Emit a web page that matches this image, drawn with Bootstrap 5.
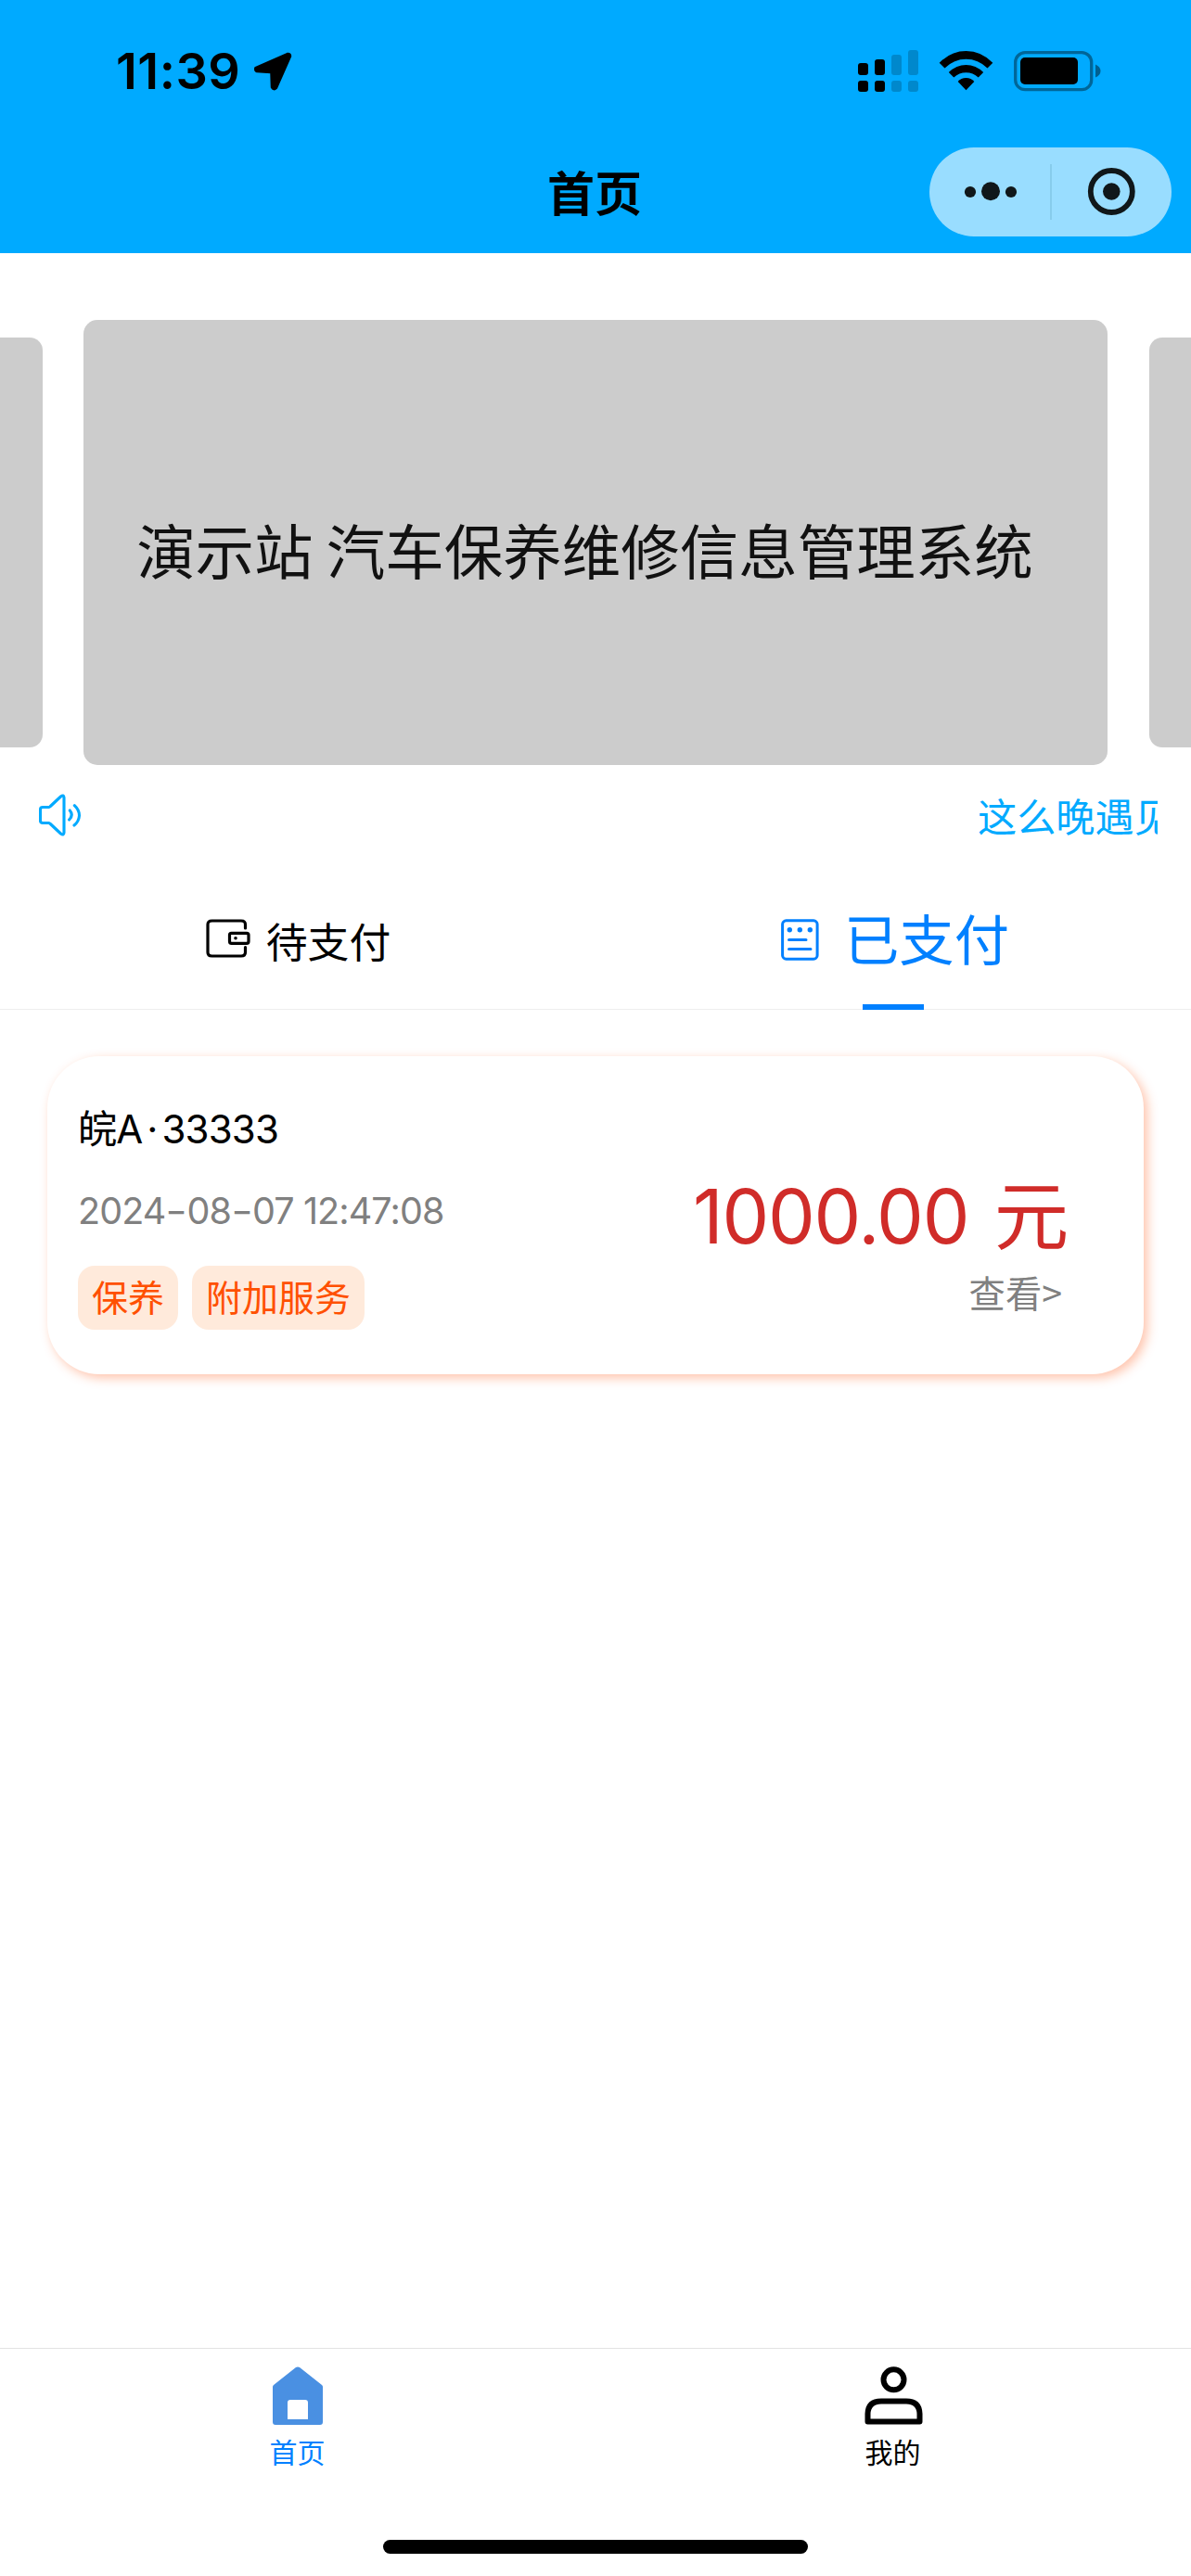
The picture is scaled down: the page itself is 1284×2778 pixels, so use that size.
<!DOCTYPE html>
<html lang="zh-CN">
<head>
<meta charset="utf-8">
<meta name="viewport" content="width=device-width, initial-scale=1">
<title>首页</title>
<link href="https://cdn.jsdelivr.net/npm/bootstrap@5.3.0/dist/css/bootstrap.min.css" rel="stylesheet">
<script src="https://cdn.jsdelivr.net/npm/bootstrap@5.3.0/dist/js/bootstrap.bundle.min.js"></script>
<style>
  body { width: 1284px; height: 2778px; overflow: hidden; background: #fff; color: #000; font-family: "Noto Sans CJK SC", sans-serif; }
  svg { display: block; flex: none; }
  .top-area { height: 273px; background: #00aaff; }
  .status-row { height: 152px; padding: 2px 97px 0 125px; }
  .clock { font: 600 54px/60px Inter, sans-serif; letter-spacing: .5px; }
  .loc { margin-left: 14px; }
  .nav-row { height: 110px; padding-right: 21px; }
  .nav-heading { font-size: 51px; line-height: 60px; font-weight: 700; padding: 0 2px 2px 0; }
  .capsule { width: 261px; height: 96px; border-radius: 48px; background: #99ddff; }
  .swiper-area { padding-top: 72px; gap: 44.5px; }
  .slide { width: 1104px; height: 480px; flex: none; border-radius: 15px; background: #ccc; color: #111; font-size: 63.5px; }
  .slide-main { padding: 13px 23px 0 0; }
  .slide-side { width: 1016px; height: 442px; border-radius: 14px; }
  .notice-row { height: 107px; padding: 0 36px 0 42px; color: #00aaff; font-size: 42.2px; line-height: 60px; }
  .notice-text { width: 194px; }
  .tabs-row { height: 157px; padding-top: 3px; border-bottom: 1px solid #eee; }
  .tab-idle { font-size: 44.8px; line-height: 70px; gap: 17px; padding-left: 1px; }
  .tab-live { font-size: 59.3px; line-height: 80px; gap: 27px; color: #0080ff; padding-left: 4px; }
  .tab-live::after { content: ""; position: absolute; left: 288px; bottom: -1px; width: 66px; height: 6px; background: #0080ff; }
  .order { margin: 50px 51px 0; padding: 46px 80px 48px 33px; height: 343px; border: 0; border-radius: 56px; box-shadow: 4px 4px 12px rgba(255,80,10,.34); }
  .plate { font-family: Inter, "Noto Sans CJK SC", sans-serif; font-size: 42px; line-height: 66px; letter-spacing: -.8px; }
  .mid-dot { display: inline-block; width: 21px; text-align: center; }
  .stamp { margin-top: 22px; font: 400 39.5px/66px Inter, sans-serif; letter-spacing: -.9px; color: #808080; }
  .dash { display: inline-block; width: 23px; text-align: center; transform: scaleX(1.3); }
  .tags { margin-top: 26px; gap: 15px; }
  .tag { padding: 0 15px; height: 69px; border-radius: 18px; background: #ffeadb; color: #ff5000; font-size: 39px; line-height: 64px; }
  .price-col { padding-top: 82px; }
  .amount { font-family: Inter, "Noto Sans CJK SC", sans-serif; font-weight: 400; font-size: 80.5px; line-height: 90px; letter-spacing: -1.2px; word-spacing: 6px; color: #d02c29; white-space: nowrap; padding-right: 2px; }
  .more { margin-top: 11px; padding-right: 8px; font-size: 39.3px; line-height: 50px; color: #808080; }
  .bottom-bar { height: 246px; border-top: 1px solid #e3e3e3; }
  .bottom-item { padding-top: 19px; font-size: 30px; line-height: 36px; }
  .bottom-label { margin-top: 9px; padding-right: 1px; }
  .bottom-on { color: #0080ff; }
  .home-line { width: 458px; height: 15px; border-radius: 8px; background: #000; margin-bottom: 24px; }
</style>
</head>
<body class="d-flex flex-column">
<header class="top-area">
  <div class="status-row d-flex align-items-center">
    <span class="clock">11:39</span>
    <svg class="loc" width="42" height="42" viewBox="0 0 42 42"><path d="M37 2.500 2.800 17.600Q2.500 20 4 20.500L19 21.500Q20 21.800 20 23L20.500 38Q22 41 24.500 38.500L39.500 4.500Q39.500 2 37 2.500Z" stroke="#000" stroke-width="3.500" stroke-linejoin="round"/></svg>
    <svg class="ms-auto" width="262" height="46" viewBox="925 53 262 46">
      <rect x="925" y="67" width="11" height="13" rx="3"/><rect x="943" y="63" width="11" height="17" rx="3"/>
      <rect x="925" y="86" width="11" height="12" rx="3"/><rect x="943" y="86" width="11" height="12" rx="3"/>
      <g fill="#0088cc"><rect x="961" y="58" width="11" height="22" rx="3"/><rect x="979" y="53" width="11" height="27" rx="3"/><rect x="961" y="86" width="11" height="12" rx="3"/><rect x="979" y="86" width="11" height="12" rx="3"/></g>
      <path d="M1012.700 66.800Q1025 54 1041.500 54T1070.300 66.800L1064.500 72.500Q1054.500 62.800 1041.500 62.800T1018.500 72.500Z"/>
      <path d="M1022.800 77Q1031 69 1041.500 69T1060.200 77L1054.700 82.500Q1049 77.200 1041.500 77.200T1028.300 82.500Z"/>
      <path d="M1032.700 87Q1036 83 1041.500 83T1050.300 87L1041.500 96.200Z"/>
      <rect x="1094.700" y="55.700" width="82" height="40" rx="10.500" fill="none" stroke="#006699" stroke-width="3.300"/>
      <rect x="1100" y="61" width="62" height="29" rx="5"/>
      <path d="M1181 68.500Q1186.500 71 1186.500 75.500T1181 82.500Z" fill="#006090"/>
    </svg>
  </div>
  <div class="nav-row d-flex align-items-center position-relative">
    <h1 class="nav-heading w-100 text-center position-absolute m-0">首页</h1>
    <div class="capsule ms-auto position-relative">
      <svg width="261" height="96" viewBox="0 0 261 96"><g fill="#10171a"><circle cx="44" cy="48" r="6.100"/><circle cx="66" cy="47.200" r="10"/><circle cx="88" cy="48" r="6.100"/><circle cx="196.300" cy="47.500" r="9.300"/></g><circle cx="196.300" cy="47.500" r="22.500" fill="none" stroke="#10171a" stroke-width="5.800"/><path d="M131 18v60" stroke="#83c8e8" stroke-width="1.600"/></svg>
    </div>
  </div>
</header>

<main class="flex-grow-1">
  <section class="swiper-area d-flex justify-content-center align-items-center overflow-hidden">
    <div class="slide slide-side"></div>
    <div class="slide slide-main d-flex align-items-center justify-content-center">演示站 汽车保养维修信息管理系统</div>
    <div class="slide slide-side"></div>
  </section>

  <section class="notice-row d-flex align-items-center justify-content-between">
    <svg width="46" height="46" viewBox="0 0 46 46" fill="none" stroke="#00aaff" stroke-width="3.100" stroke-linecap="round" stroke-linejoin="round"><path d="M1.500 17Q1.500 14.500 4 14.500H10.500Q11.500 14.300 12.300 13.500L23.500 3Q26.800.5 27 4V42Q26.800 45.500 23.500 43L12.300 32.500Q11.500 31.600 10.500 31.500H4Q1.500 31.500 1.500 29ZM33.300 18Q37.500 23 32.600 28M38.300 12.700Q43.500 17.500 43.500 23.500 43 30 38 34"/></svg>
    <div class="notice-text overflow-hidden text-nowrap">这么晚遇见</div>
  </section>

  <nav class="tabs-row d-flex">
    <div class="tab-idle w-50 d-flex align-items-center justify-content-center">
      <svg width="48" height="42" viewBox="0 0 48 42" fill="none" stroke="#000" stroke-width="3.200" stroke-linecap="round" stroke-linejoin="round"><path d="M42.500 10V6Q42.500 2 38 2H6.500Q2 2 2 6V36Q2 40 6.500 40H38Q42.500 40 42.500 36V30.500"/><rect x="25.500" y="15.300" width="20.500" height="11" rx="2"/><circle cx="32" cy="20.800" r="1.800" fill="#000" stroke="none"/></svg>
      <span class="pt-1">待支付</span>
    </div>
    <div class="tab-live w-50 d-flex align-items-center justify-content-center position-relative">
      <svg class="mt-1" width="41" height="45" viewBox="0 0 41 45" fill="none" stroke="#0080ff" stroke-width="3" stroke-linecap="round"><rect x="1.600" y="1.800" width="37.500" height="41.400" rx="4"/><path d="M8.500 22.500H27M8.500 32.500H32"/><g fill="#0080ff" stroke="none"><circle cx="9.300" cy="11.800" r="2.700"/><circle cx="20.300" cy="11.800" r="2.700"/><circle cx="31.300" cy="11.800" r="2.700"/></g></svg>
      <span class="pb-1">已支付</span>
    </div>
  </nav>

  <article class="order card flex-row justify-content-between">
    <div>
      <div class="plate">皖A<span class="mid-dot">·</span>33333</div>
      <div class="stamp">2024<span class="dash">-</span>08<span class="dash">-</span>07 12:47:08</div>
      <div class="tags d-flex"><span class="tag">保养</span><span class="tag">附加服务</span></div>
    </div>
    <div class="price-col text-end">
      <div class="amount">1000.00 元</div>
      <div class="more">查看&gt;</div>
    </div>
  </article>
</main>

<footer class="bottom-bar d-flex flex-column">
  <div class="d-flex">
    <div class="bottom-item w-50 d-flex flex-column align-items-center">
      <svg width="54" height="64" viewBox="0 0 54 64"><path d="M25 1Q27 0 29 1L53 20Q54 21 54 22V60Q54 63 51 63H3Q0 63 0 60V22Q0 21 1 20ZM19 36Q16 36 16 39V57H38V39Q38 36 35 36Z" fill="#4a90e2" fill-rule="evenodd"/></svg>
      <span class="bottom-label bottom-on">首页</span>
    </div>
    <div class="bottom-item w-50 d-flex flex-column align-items-center">
      <svg width="63" height="64" viewBox="0 0 63 64" fill="none" stroke="#000" stroke-width="6"><circle cx="31.500" cy="14.300" r="11"/><path d="M3.500 59.500V51Q4 37.500 18 37.500H45Q59 37.500 59.500 51V59.500Z" stroke-linejoin="round"/></svg>
      <span class="bottom-label">我的</span>
    </div>
  </div>
  <div class="home-line mx-auto mt-auto"></div>
</footer>
</body>
</html>
